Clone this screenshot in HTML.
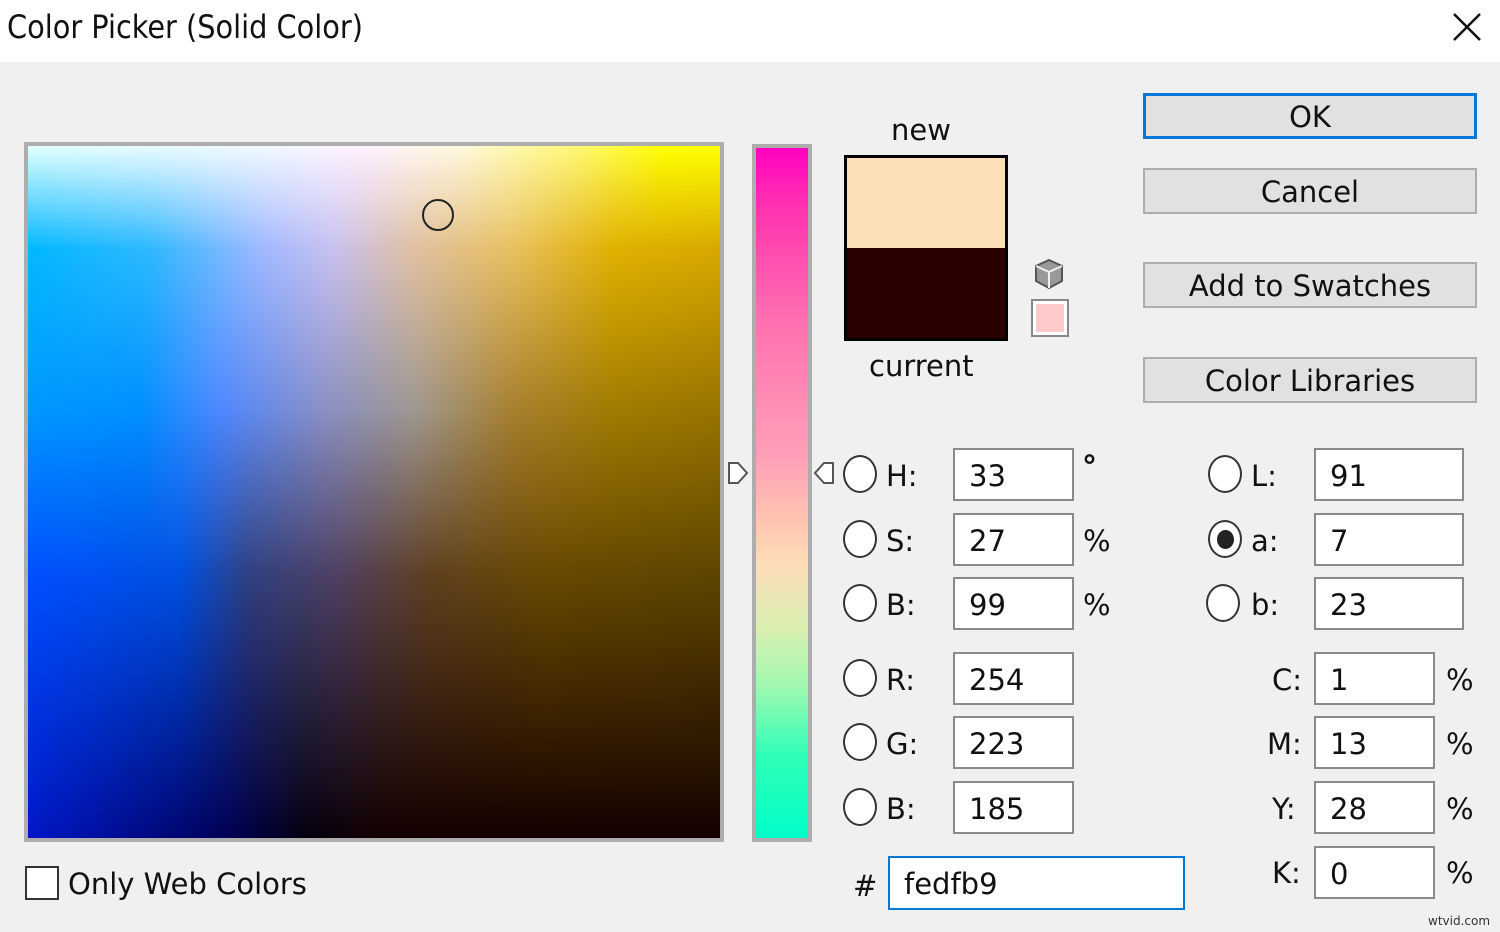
<!DOCTYPE html>
<html><head><meta charset="utf-8"><style>
*{margin:0;padding:0;box-sizing:border-box}
body{width:1500px;height:932px;background:#f0f0f0;font-family:"DejaVu Sans","Liberation Sans",sans-serif;color:#111;position:relative;overflow:hidden}
.a{position:absolute}
.t{position:absolute;font-size:29px;line-height:34px;white-space:nowrap;padding-top:3px}
.fld{position:absolute;background:#fff;border:2px solid #8a8a8a;font-size:29px;line-height:53px;padding-left:14px}
.btn{position:absolute;left:1143px;width:334px;height:46px;background:#e1e1e1;border:2px solid #adadad;font-size:29px;text-align:center;line-height:44px}
.rad{position:absolute;width:34px;height:38px;border:2px solid #333;border-radius:50%;background:#fff}
.lay{position:absolute;left:0;top:0;width:100%;height:100%}
</style></head><body>
<div class="a" style="left:0;top:0;width:1500px;height:62px;background:#fff"></div>
<div class="t" style="left:7px;top:7px;font-size:32px;font-family:'DejaVu Sans Condensed',sans-serif;font-stretch:condensed">Color Picker (Solid Color)</div>
<svg class="a" style="left:1452px;top:12px" width="30" height="30"><path d="M2 2L28 28M28 2L2 28" stroke="#111" stroke-width="2.5"/></svg>

<div class="a" style="left:24px;top:142px;width:700px;height:700px;border:4px solid #adadad;background:#f4f4f4"></div>
<div class="a" style="left:28px;top:146px;width:692px;height:692px;overflow:hidden">
 <div class="lay" style="background:linear-gradient(90deg,#0018c8 0%,#000050 30%,#050010 40%,#140000 52%,#140000 100%)"></div>
 <div class="lay" style="background:linear-gradient(90deg,#0050ff 0%,#0050e0 22%,#304080 32%,#504060 45%,#604020 58%,#684800 75%,#5e4400 100%);-webkit-mask-image:linear-gradient(180deg,#000 0%,#000 62%,transparent 100%)"></div>
 <div class="lay" style="background:linear-gradient(90deg,#0098ff 0%,#0090ff 16%,#5088ff 28%,#8890c8 42%,#a09890 56%,#a88030 70%,#a07c00 85%,#987400 100%);-webkit-mask-image:linear-gradient(180deg,#000 0%,#000 38%,transparent 62%)"></div>
 <div class="lay" style="background:linear-gradient(90deg,#00b8ff 0%,#30b8ff 18%,#a0b8ff 34%,#c8c0f0 44%,#e0c0a0 56%,#e8c060 70%,#e0b000 85%,#d8a800 100%);-webkit-mask-image:linear-gradient(180deg,#000 0%,#000 15%,transparent 38%)"></div>
 <div class="lay" style="background:linear-gradient(90deg,#e0ffff 0%,#f0f8ff 35%,#fff0ff 48%,#fff8e0 62%,#fff870 80%,#ffff00 92%);-webkit-mask-image:linear-gradient(180deg,#000 0%,transparent 15%)"></div>
</div>
<div class="a" style="left:422px;top:199px;width:32px;height:32px;border:2.5px solid #222;border-radius:50%"></div>

<div class="a" style="left:752px;top:144px;width:60px;height:698px;border:4px solid #adadad;background:linear-gradient(180deg,#ff00c0 0%,#ff30b0 8%,#ff70b0 25%,#ffa0b8 45%,#ffc8b0 55%,#ffdcb8 60%,#d8f0b0 70%,#a0f8b0 78%,#30ffb8 88%,#00ffc8 100%)"></div>
<svg class="a" style="left:726px;top:460px" width="24" height="26"><path d="M3 3H12L21 13L12 23H3Z" fill="#fff" stroke="#555" stroke-width="2"/></svg>
<svg class="a" style="left:812px;top:460px" width="24" height="26"><path d="M21 3H12L3 13L12 23H21Z" fill="#fff" stroke="#555" stroke-width="2"/></svg>

<div class="t" style="left:891px;top:110px">new</div>
<div class="a" style="left:844px;top:155px;width:164px;height:186px;border:3px solid #000;background:#000">
 <div style="height:90px;background:#fcdfb6"></div><div style="height:90px;background:#2a0000"></div>
</div>
<div class="t" style="left:869px;top:346px">current</div>
<svg class="a" style="left:1032px;top:257px" width="34" height="34"><path d="M17 3L30 9V24L17 31L4 24V9Z" fill="#999" stroke="#555" stroke-width="2"/><path d="M4 9L17 15L30 9M17 15V31" stroke="#eee" stroke-width="2" fill="none"/></svg>
<div class="a" style="left:1031px;top:299px;width:38px;height:38px;border:2px solid #888;background:#fff;padding:3px"><div style="width:100%;height:100%;background:#fccaca"></div></div>

<div class="btn" style="top:93px;border:3px solid #0078d7;line-height:42px">OK</div>
<div class="btn" style="top:168px">Cancel</div>
<div class="btn" style="top:262px">Add to Swatches</div>
<div class="btn" style="top:357px">Color Libraries</div>

<div class="rad" style="left:843px;top:455px"></div><div class="t" style="left:886px;top:456px">H:</div>
<div class="fld" style="left:953px;top:448px;width:121px;height:53px">33</div><div class="t" style="left:1082px;top:448px;font-size:30px;font-weight:bold">°</div>
<div class="rad" style="left:843px;top:520px"></div><div class="t" style="left:886px;top:521px">S:</div>
<div class="fld" style="left:953px;top:513px;width:121px;height:53px">27</div><div class="t" style="left:1083px;top:521px">%</div>
<div class="rad" style="left:843px;top:584px"></div><div class="t" style="left:886px;top:585px">B:</div>
<div class="fld" style="left:953px;top:577px;width:121px;height:53px">99</div><div class="t" style="left:1083px;top:585px">%</div>
<div class="rad" style="left:843px;top:659px"></div><div class="t" style="left:886px;top:660px">R:</div>
<div class="fld" style="left:953px;top:652px;width:121px;height:53px">254</div>
<div class="rad" style="left:843px;top:723px"></div><div class="t" style="left:886px;top:724px">G:</div>
<div class="fld" style="left:953px;top:716px;width:121px;height:53px">223</div>
<div class="rad" style="left:843px;top:788px"></div><div class="t" style="left:886px;top:789px">B:</div>
<div class="fld" style="left:953px;top:781px;width:121px;height:53px">185</div>

<div class="rad" style="left:1208px;top:455px"></div><div class="t" style="left:1251px;top:456px">L:</div>
<div class="fld" style="left:1314px;top:448px;width:150px;height:53px">91</div>
<div class="rad" style="left:1208px;top:520px"><div style="margin:8px auto;width:17px;height:19px;border-radius:50%;background:#222"></div></div><div class="t" style="left:1251px;top:521px">a:</div>
<div class="fld" style="left:1314px;top:513px;width:150px;height:53px">7</div>
<div class="rad" style="left:1206px;top:584px"></div><div class="t" style="left:1251px;top:585px">b:</div>
<div class="fld" style="left:1314px;top:577px;width:150px;height:53px">23</div>

<div class="t" style="left:1272px;top:660px">C:</div><div class="fld" style="left:1314px;top:652px;width:121px;height:53px">1</div><div class="t" style="left:1446px;top:660px">%</div>
<div class="t" style="left:1267px;top:724px">M:</div><div class="fld" style="left:1314px;top:716px;width:121px;height:53px">13</div><div class="t" style="left:1446px;top:724px">%</div>
<div class="t" style="left:1272px;top:789px">Y:</div><div class="fld" style="left:1314px;top:781px;width:121px;height:53px">28</div><div class="t" style="left:1446px;top:789px">%</div>
<div class="t" style="left:1272px;top:853px">K:</div><div class="fld" style="left:1314px;top:846px;width:121px;height:53px">0</div><div class="t" style="left:1446px;top:853px">%</div>

<div class="t" style="left:853px;top:866px">#</div>
<div class="fld" style="left:888px;top:856px;width:297px;height:54px;border:2px solid #0078d7">fedfb9</div>

<div class="a" style="left:25px;top:866px;width:34px;height:34px;border:2px solid #333;background:#fff"></div>
<div class="t" style="left:68px;top:864px">Only Web Colors</div>
<div class="t" style="left:1428px;top:910px;font-size:12px;line-height:16px;color:#333">wtvid.com</div>
</body></html>
